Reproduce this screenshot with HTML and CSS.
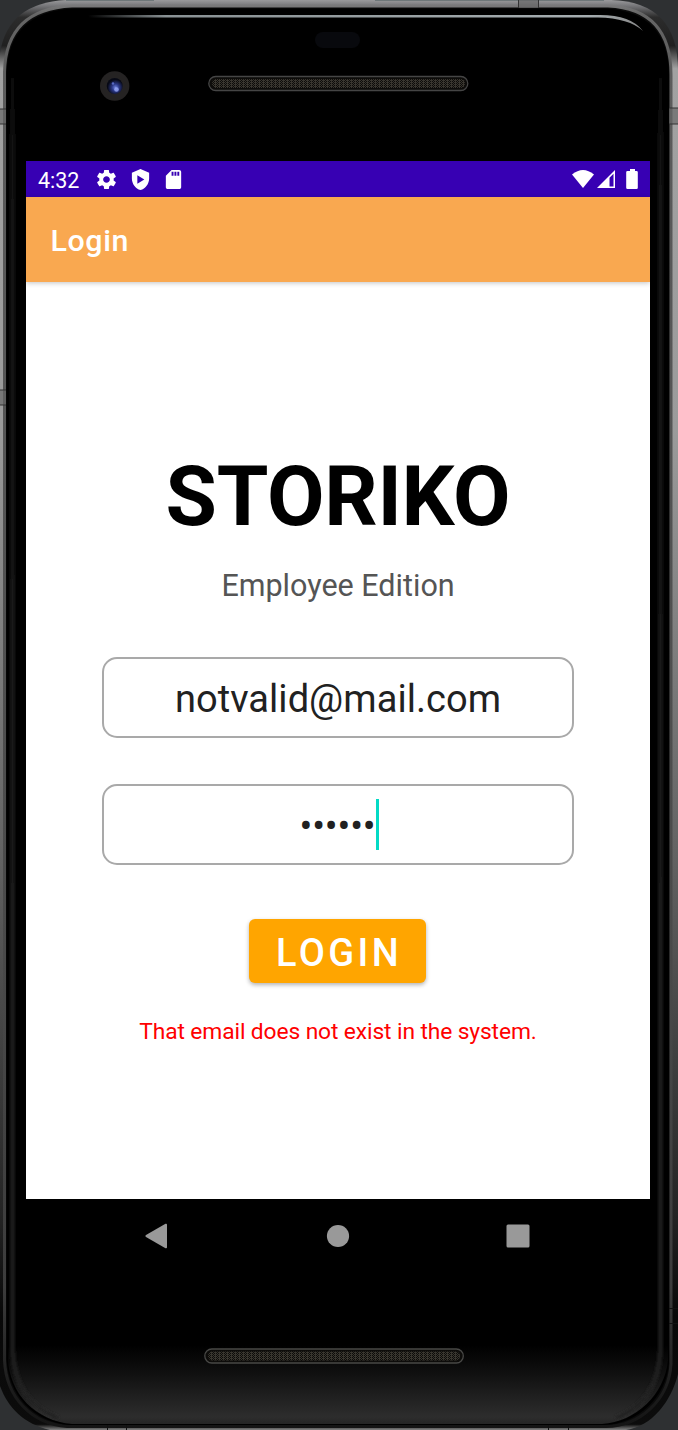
FILE: index.html
```html
<!DOCTYPE html>
<html lang="en">
<head>
<meta charset="utf-8">
<title>Login</title>
<link rel="stylesheet" href="styles.css">
</head>
<body>
<div class="device">
  <svg class="chassis" viewBox="0 0 678 1430" aria-hidden="true">
    <defs>
      <linearGradient id="metal" x1="0" y1="0" x2="0" y2="1430" gradientUnits="userSpaceOnUse">
        <stop offset="0" stop-color="#9a9a9c"/><stop offset=".004" stop-color="#77777a"/>
        <stop offset=".012" stop-color="#2c2c2c"/><stop offset=".032" stop-color="#202020"/>
        <stop offset=".048" stop-color="#a2a2a2"/>
        <stop offset=".3" stop-color="#9b9b9b"/><stop offset=".6" stop-color="#626262"/>
        <stop offset=".85" stop-color="#242424"/><stop offset=".92" stop-color="#080808"/>
        <stop offset=".996" stop-color="#0c0c0c"/><stop offset="1" stop-color="#858585"/>
      </linearGradient>
      <linearGradient id="rail" x1="0" y1="0" x2="0" y2="1430" gradientUnits="userSpaceOnUse">
        <stop offset="0" stop-color="#858587"/><stop offset=".01" stop-color="#666"/>
        <stop offset=".05" stop-color="#5c5c5c"/><stop offset=".7" stop-color="#484848"/>
        <stop offset=".9" stop-color="#3c3c3c"/><stop offset=".97" stop-color="#1c1c1c"/><stop offset="1" stop-color="#141414"/>
      </linearGradient>
      <linearGradient id="sheen" x1="88" x2="644" y1="0" y2="0" gradientUnits="userSpaceOnUse">
        <stop offset="0" stop-color="#899194" stop-opacity="0"/><stop offset=".14" stop-color="#899194"/>
        <stop offset=".9" stop-color="#a5adb0"/><stop offset="1" stop-color="#888" />
      </linearGradient>
      <linearGradient id="chin" x1="0" x2="0" y1="1345" y2="1425" gradientUnits="userSpaceOnUse">
        <stop offset="0" stop-color="#2d2d2d" stop-opacity="0"/><stop offset=".35" stop-color="#2d2d2d" stop-opacity=".35"/>
        <stop offset=".9" stop-color="#2d2d2d"/><stop offset="1" stop-color="#232323"/>
      </linearGradient>
      <linearGradient id="glassSide" x1="0" x2="0" y1="0" y2="1430" gradientUnits="userSpaceOnUse">
        <stop offset=".03" stop-color="#000"/><stop offset=".12" stop-color="#191919"/><stop offset="1" stop-color="#242424"/>
      </linearGradient>
      <radialGradient id="lens" cx=".55" cy=".6" r=".5">
        <stop offset="0" stop-color="#7184df"/><stop offset=".45" stop-color="#2a3786"/><stop offset="1" stop-color="#070915"/>
      </radialGradient>
      <pattern id="mesh" width="4" height="2" patternUnits="userSpaceOnUse">
        <path d="M0 0h1v1H0zM2 0h1v1H2zM1 1h1v1H1zM3 0h1v2H3z" fill="#39362f"/>
      </pattern>
      <filter id="soft" filterUnits="userSpaceOnUse" x="0" y="0" width="678" height="1430"><feGaussianBlur stdDeviation="1.500"/></filter>
    </defs>
    <path d="M66 0H611Q678 2 678 70V1374C671 1402 652 1426 626 1430H50C24 1424 8 1408 0 1386V53Q8 3 66 0Z" fill="url(#metal)"/>
    <path d="M66 0H154V1H66ZM375 0H604V1H375Z" fill="#6e7779"/>
    <path d="M72 6H608Q671 9 671 75V1364C669 1400 640 1426 606 1426.500H67C32 1424 6 1398 4.500 1360V72Q6 9 72 6Z" fill="#0b0b0b" stroke="url(#rail)" stroke-width="3"/>
    <path d="M75 8.500H604Q669 11 669 76V1362C667 1397 638 1424 604 1425H69C34 1422 8 1396 6.500 1358V74Q8 11 75 8.500Z" fill="#000"/>
    <path d="M8 1345V1358C9 1394 36 1421 72 1424H602C636 1422 665 1394 668 1360V1345Z" fill="url(#chin)"/>
    <path d="M12.500 78V1350Q15 1402 58 1418M660.500 78V1350Q658 1402 616 1418" fill="none" stroke="url(#glassSide)" stroke-width="4" filter="url(#soft)"/>
    <path d="M88 15H600Q631 15 643 31Q629 18 598 17.500H88Z" fill="url(#sheen)"/>
    <path d="M0 109H6V124H0ZM669 108H678V124H669ZM0 390H6V405H0ZM518 0H538V8H518Z" fill="#666" fill-opacity=".65"/>
    <path d="M0 109H6M0 124H6M669 108H678M669 124H678M0 390H6M0 405H6M518.500 0V8M538.500 0V8" stroke="#333" fill="none"/>
    <path d="M669 1308.500H678M669 1323.500H678M107.500 1425V1430M126.500 1425V1430M548.500 1425V1430M568.500 1425V1430" stroke="#111" fill="none"/>
    <rect x="315" y="32" width="45" height="16" rx="8" fill="#08090d"/>
    <circle cx="114.700" cy="86" r="14.700" fill="#252323"/>
    <circle cx="114.700" cy="86" r="8" fill="url(#lens)"/>
    <circle cx="116.500" cy="89.500" r="2.300" fill="#a0b0ff" fill-opacity=".75"/>
    <circle cx="113" cy="83.500" r="1.200" fill="#586ac4"/>
    <rect x="208.800" y="76.500" width="259" height="14" rx="7" fill="#0d0c0a" stroke="#454545" stroke-width="1.300"/>
    <rect x="212" y="79" width="253" height="9" rx="4.500" fill="url(#mesh)"/>
    <rect x="204.800" y="1349" width="258.500" height="14" rx="7" fill="#0d0c0a" stroke="#484846" stroke-width="1.300"/>
    <rect x="208" y="1351.500" width="252" height="9" rx="4.500" fill="url(#mesh)"/>
  </svg>

  <main class="screen">
    <header class="status">
      <span class="clock">4:32</span>
      <svg class="glyph" viewBox="0 0 24 24"><path d="M19.430 12.980c.04-.32.07-.64.07-.98s-.03-.66-.07-.98l2.110-1.650c.19-.15.24-.42.12-.64l-2-3.460c-.12-.22-.39-.3-.61-.22l-2.490 1c-.52-.4-1.080-.73-1.690-.98l-.38-2.650C14.460 2.180 14.250 2 14 2h-4c-.25 0-.46.18-.49.42l-.38 2.650c-.61.25-1.170.59-1.690.98l-2.490-1c-.23-.09-.49 0-.61.22l-2 3.460c-.13.22-.07.49.12.64l2.110 1.650c-.04.32-.07.65-.07.98s.03.66.07.98l-2.110 1.650c-.19.15-.24.42-.12.64l2 3.460c.12.22.39.3.61.22l2.490-1c.52.4 1.080.73 1.690.98l.38 2.650c.03.24.24.42.49.42h4c.25 0 .46-.18.49-.42l.38-2.650c.61-.25 1.170-.59 1.690-.98l2.490 1c.23.09.49 0 .61-.22l2-3.460c.12-.22.07-.49-.12-.64l-2.110-1.650zM12 15.500c-1.930 0-3.500-1.570-3.500-3.500s1.570-3.500 3.500-3.500 3.500 1.570 3.500 3.500-1.570 3.500-3.500 3.500z"/></svg>
      <svg class="glyph" viewBox="0 0 24 24"><path fill-rule="evenodd" d="M12 1 3 5v6c0 5.550 3.840 10.740 9 12 5.160-1.260 9-6.450 9-12V5L12 1zM8.700 7.500v9l7.300-4.500z"/></svg>
      <svg class="glyph" viewBox="0 0 24 24"><path d="M18 2h-8L4.020 8 4 20c0 1.100.9 2 2 2h12c1.100 0 2-.9 2-2V4c0-1.100-.9-2-2-2zm-6 6h-2V4h2v4zm3 0h-2V4h2v4zm3 0h-2V4h2v4z"/></svg>
      <svg class="radio" viewBox="0 0 68 22">
        <path d="M2 5.500Q13 -3.500 24 5.500L13 19Z"/>
        <path fill-rule="evenodd" d="M27 19 45 1V19ZM39.500 8.700V17.500H43.500V4.700Z"/>
        <path d="M60 0h5v2h1.500q1.300 0 1.300 1.300V18.700q0 1.300-1.300 1.300H57.500q-1.300 0-1.300-1.300V3.300Q56.200 2 57.500 2H60Z"/>
      </svg>
    </header>
    <div class="appbar"><h2 class="appbar-title">Login</h2></div>
    <form class="login">
      <h1 class="brand">STORIKO</h1>
      <p class="edition">Employee Edition</p>
      <div class="field email">notvalid@mail.com</div>
      <div class="field password"><span class="dots">••••••</span><span class="caret"></span></div>
      <button class="submit" type="button">LOGIN</button>
      <p class="error">That email does not exist in the system.</p>
    </form>
  </main>

  <nav class="navbar">
    <svg class="nav-icon" viewBox="0 0 26 26"><path d="M3 12 22.500 .8Q24 .2 24 1.800V24.200Q24 25.800 22.500 25.200L3 14Q1.500 13 3 12Z"/></svg>
    <svg class="nav-icon" viewBox="0 0 26 26"><circle cx="13" cy="13" r="11.100"/></svg>
    <svg class="nav-icon" viewBox="0 0 26 26"><rect x="1.500" y="1.500" width="23" height="23" rx="1.500"/></svg>
  </nav>
</div>
</body>
</html>
```
FILE: styles.css
```css
* { box-sizing: border-box; }

body {
  margin: 0;
  background: #2e3032;
  font-family: Roboto, sans-serif;
}

.device {
  position: relative;
  width: 678px;
  height: 1430px;
  padding: 161px 28px 0 26px;
  overflow: hidden;
}

.chassis {
  position: absolute;
  inset: 0;
  width: 678px;
  height: 1430px;
}

.screen {
  position: relative;
  display: flex;
  flex-direction: column;
  height: 1038px;
  background: #fff;
}

.status {
  display: flex;
  align-items: center;
  height: 36.400px;
  padding: 0 12.400px 0 12px;
  background: #3700b3;
  color: #fff;
}

.clock {
  width: 57.400px;
  padding-top: 3px;
  font-size: 21.500px;
  line-height: 36px;
}

.glyph {
  width: 23px;
  height: 23px;
  margin-right: 10.500px;
  fill: #fff;
}

.radio {
  width: 68px;
  height: 22px;
  margin: 2px 0 0 auto;
  fill: #fff;
}

.appbar {
  display: flex;
  align-items: center;
  height: 85px;
  padding: 2px 24.500px 0;
  background: #f9a850;
  box-shadow: 0 1px 5px rgba(0, 0, 0, .24);
}

.appbar-title {
  margin: 0;
  font-size: 30.400px;
  font-weight: 500;
  letter-spacing: .6px;
  color: #fff;
}

.login {
  display: flex;
  flex-direction: column;
  align-items: center;
  padding-top: 165.600px;
}

.brand {
  margin: 0;
  font-size: 83.500px;
  font-weight: 700;
  line-height: 98px;
  letter-spacing: -.3px;
  color: #000;
}

.edition {
  margin: 22px 0 0;
  font-size: 30.500px;
  line-height: 36px;
  color: #555;
}

.field {
  display: flex;
  align-items: center;
  justify-content: center;
  width: 472px;
  height: 81px;
  border: 2px solid #a9a9a9;
  border-radius: 15px;
  font-size: 38px;
  color: #212121;
}

.email { margin-top: 53px; padding-top: 4px; letter-spacing: .05px; }

.password { margin-top: 46px; padding-left: 2px; }

.dots {
  padding-top: 4px;
  letter-spacing: -.15px;
}

.caret {
  width: 3px;
  height: 51px;
  background: #03dac5;
}

.submit {
  width: 177px;
  height: 64px;
  margin: 54px 1px 0 0;
  padding: 4px 0 0 3px;
  border: 0;
  border-radius: 6px;
  background: #ffa500;
  box-shadow: 0 2px 4px rgba(0, 0, 0, .3);
  color: #fff;
  font: 500 38px/1 Roboto, sans-serif;
  letter-spacing: 3.390px;
}

.error {
  margin: 35px 0 0;
  font-size: 22.800px;
  line-height: 27px;
  letter-spacing: -.12px;
  color: #f00;
}

.navbar {
  position: relative;
  display: flex;
  justify-content: space-between;
  padding: 23.500px 119px 0 117px;
}

.nav-icon {
  width: 26px;
  height: 26px;
  fill: #999;
}

.nav-icon:nth-child(2) { margin-left: 1px; }
```
